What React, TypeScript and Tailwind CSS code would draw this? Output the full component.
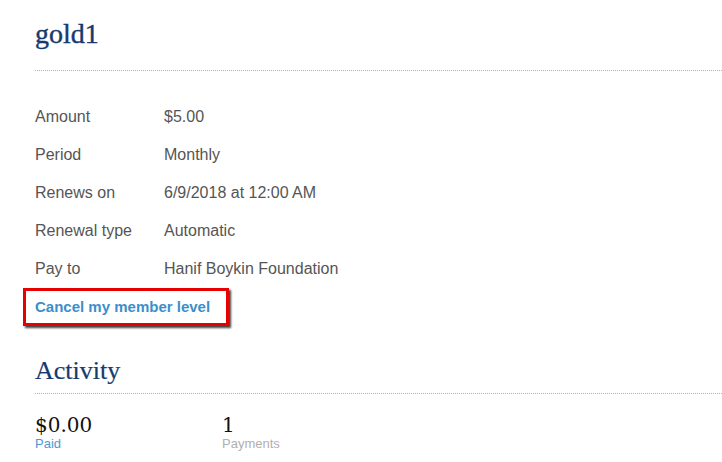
const rows: [string, string][] = [
  ["Amount", "$5.00"],
  ["Period", "Monthly"],
  ["Renews on", "6/9/2018 at 12:00 AM"],
  ["Renewal type", "Automatic"],
  ["Pay to", "Hanif Boykin Foundation"],
];

export default function App() {
  return (
    <div className="w-[722px] h-[462px] overflow-hidden bg-white pl-[35px] font-['Liberation_Sans',Arial,sans-serif]">
      <h1 className="pt-[18px] text-[28px] leading-[32px] text-[#163a70] font-['Liberation_Serif',serif] [-webkit-text-stroke:0.4px_#163a70]">
        gold1
      </h1>
      <div className="mt-[20px] border-t border-dotted border-[#a9b3bd]" />

      <div className="mt-[27px] flex flex-col text-[16px] text-[#555]">
        {rows.map(([label, value]) => (
          <div key={label} className="flex h-[38px] items-center">
            <span className="w-[129px]">{label}</span>
            <span>{value}</span>
          </div>
        ))}
      </div>

      <div className="-ml-[12px] inline-block border-[3px] border-[#e60000] py-[4px] pl-[9px] pr-[16px] shadow-[2px_2px_2px_rgba(0,0,0,0.75)]">
        <a className="text-[15px] font-bold leading-[18px] text-[#3a8fcb]">Cancel my member level</a>
      </div>

      <h2 className="mt-[30px] text-[26px] leading-[30px] text-[#163a70] font-['Liberation_Serif',serif] [-webkit-text-stroke:0.2px_#163a70]">
        Activity
      </h2>
      <div className="mt-[7px] border-t border-dotted border-[#a9b3bd]" />

      <div className="mt-[21px] flex">
        <div className="w-[187px] flex flex-col">
          <span className="text-[20px] leading-[21px] text-[#111] font-['DejaVu_Serif',serif]">$0.00</span>
          <span className="text-[13px] leading-[15px] text-[#4a9ad4]">Paid</span>
        </div>
        <div className="flex flex-col">
          <span className="text-[20px] leading-[21px] text-[#111] font-['DejaVu_Serif',serif]">1</span>
          <span className="text-[13px] leading-[15px] text-[#b0b0b0]">Payments</span>
        </div>
      </div>
    </div>
  );
}
